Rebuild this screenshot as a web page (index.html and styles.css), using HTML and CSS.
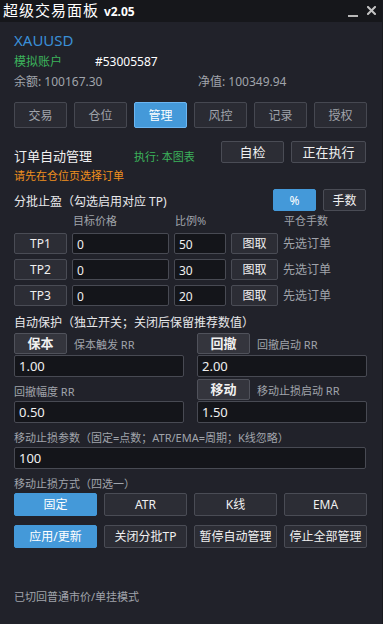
FILE: index.html
```html
<!DOCTYPE html>
<html lang="zh-CN">
<head>
    <meta charset="UTF-8">
    <meta name="viewport" content="width=device-width, initial-scale=1.0">
    <title>超级交易面板</title>
    <link rel="stylesheet" href="styles.css">
</head>
<body>

<div class="titlebar">
    <div class="title">超级交易面板 <span class="version">v2.05</span></div>
    <div class="win-ctrl">
        <span class="win-min"></span>
        <svg class="win-close" width="9" height="9" viewBox="0 0 9 9">
            <path d="M1 1 L8 8 M8 1 L1 8" stroke="#c4c4c4" stroke-width="2" stroke-linecap="square"/>
        </svg>
    </div>
</div>

<div class="panel">
    <div class="symbol">XAUUSD</div>
    <div class="account-row">
        <span class="acc-type">模拟账户</span>
        <span class="acc-no">#53005587</span>
    </div>
    <div class="balance-row">
        <span class="bal">余额: 100167.30</span>
        <span class="equity">净值: 100349.94</span>
    </div>

    <div class="tabs">
        <button class="tab">交易</button>
        <button class="tab">仓位</button>
        <button class="tab active">管理</button>
        <button class="tab">风控</button>
        <button class="tab">记录</button>
        <button class="tab">授权</button>
    </div>

    <div class="manage-head">
        <div class="manage-title">
            <span class="section-big">订单自动管理</span>
            <span class="exec">执行: 本图表</span>
        </div>
        <div class="head-btns">
            <button class="btn btn-check">自检</button>
            <button class="btn btn-running">正在执行</button>
        </div>
    </div>
    <div class="warn">请先在仓位页选择订单</div>

    <div class="tp-head">
        <span class="section">分批止盈（勾选启用对应 TP)</span>
        <div class="head-btns">
            <button class="btn btn-blue btn-unit">%</button>
            <button class="btn btn-unit">手数</button>
        </div>
    </div>
    <div class="tp-grid tp-labels">
        <span></span>
        <span>目标价格</span>
        <span>比例%</span>
        <span></span>
        <span>平仓手数</span>
    </div>
    <div class="tp-grid tp-row">
        <button class="btn">TP1</button>
        <div class="field">0</div>
        <div class="field">50</div>
        <button class="btn">图取</button>
        <span class="tp-lots">先选订单</span>
    </div>
    <div class="tp-grid tp-row">
        <button class="btn">TP2</button>
        <div class="field">0</div>
        <div class="field">30</div>
        <button class="btn">图取</button>
        <span class="tp-lots">先选订单</span>
    </div>
    <div class="tp-grid tp-row">
        <button class="btn">TP3</button>
        <div class="field">0</div>
        <div class="field">20</div>
        <button class="btn">图取</button>
        <span class="tp-lots">先选订单</span>
    </div>

    <div class="section protect-title">自动保护（独立开关；关闭后保留推荐数值）</div>
    <div class="protect">
        <div class="protect-col">
            <div class="toggle-row">
                <button class="btn btn-toggle">保本</button>
                <span class="hint">保本触发 RR</span>
            </div>
            <div class="field field-wide">1.00</div>
            <div class="toggle-row">
                <span class="hint hint-left">回撤幅度 RR</span>
            </div>
            <div class="field field-wide">0.50</div>
        </div>
        <div class="protect-col">
            <div class="toggle-row">
                <button class="btn btn-toggle">回撤</button>
                <span class="hint">回撤启动 RR</span>
            </div>
            <div class="field field-wide">2.00</div>
            <div class="toggle-row">
                <button class="btn btn-toggle">移动</button>
                <span class="hint">移动止损启动 RR</span>
            </div>
            <div class="field field-wide">1.50</div>
        </div>
    </div>

    <div class="hint sub-title">移动止损参数（固定=点数；ATR/EMA=周期；K线忽略）</div>
    <div class="field field-wide">100</div>

    <div class="hint sub-title">移动止损方式（四选一）</div>
    <div class="quad modes">
        <button class="btn btn-blue">固定</button>
        <button class="btn">ATR</button>
        <button class="btn">K线</button>
        <button class="btn">EMA</button>
    </div>
    <div class="quad actions">
        <button class="btn btn-blue">应用/更新</button>
        <button class="btn">关闭分批TP</button>
        <button class="btn">暂停自动管理</button>
        <button class="btn">停止全部管理</button>
    </div>

    <div class="status">已切回普通市价/单挂模式</div>
</div>

</body>
</html>
```

FILE: styles.css
```css
* {
    box-sizing: border-box;
}

html, body {
    margin: 0;
    padding: 0;
    width: 383px;
    height: 624px;
    overflow: hidden;
}

body {
    font-family: "Noto Sans", "Noto Sans CJK SC", sans-serif;
    background-color: #21222a;
    color: #e8e8ea;
    font-size: 12px;
    border-right: 1px solid #18191e;
}

button {
    font-family: inherit;
    margin: 0;
    padding: 0;
}

.titlebar {
    height: 22px;
    background-color: #16171b;
    display: flex;
    align-items: center;
    justify-content: space-between;
    padding: 0 6px 0 3px;
}

.title {
    font-size: 15px;
    letter-spacing: 1px;
    line-height: 22px;
    color: #ffffff;
}

.version {
    font-size: 12px;
    font-weight: bold;
    letter-spacing: 0;
}

.win-ctrl {
    display: flex;
    align-items: center;
    gap: 9px;
    padding-top: 1px;
}

.win-min {
    display: block;
    width: 10px;
    height: 2px;
    background-color: #b8b8b8;
    margin-top: 9px;
}

.win-close {
    display: block;
    margin-bottom: 3px;
}

.panel {
    padding: 0 16px 0 14px;
}

.symbol {
    margin-top: 8px;
    height: 20px;
    line-height: 20px;
    font-size: 15px;
    color: #3a8fd6;
}

.account-row, .balance-row {
    margin-top: 2px;
    height: 20px;
    line-height: 20px;
    display: flex;
}

.balance-row {
    margin-top: 0;
    color: #a0a4ab;
}

.acc-type {
    color: #3cb35c;
    width: 81px;
}

.acc-no {
    color: #ffffff;
}

.bal {
    width: 184px;
}

.tabs {
    margin-top: 10px;
    display: grid;
    grid-template-columns: repeat(6, 53px);
    column-gap: 7px;
}

.tab {
    height: 26px;
    background-color: #2a2b33;
    border: 1px solid #464851;
    border-radius: 2px;
    color: #a0a4ab;
    font-size: 12px;
}

.tab.active {
    background-color: #4499d9;
    border-color: #6cb6f2;
    color: #ffffff;
}

.btn {
    height: 21px;
    background-color: #2c2d35;
    border: 1px solid #4a4c55;
    border-radius: 2px;
    color: #f0f0f0;
    font-size: 12px;
    line-height: 19px;
}

.btn-blue {
    background-color: #4499d9;
    border-color: #4499d9;
    color: #ffffff;
}

.manage-head, .tp-head {
    display: flex;
    justify-content: space-between;
    height: 22px;
}

.manage-head {
    margin-top: 13px;
}

.manage-title {
    display: flex;
    align-items: baseline;
    padding-top: 5px;
}

.section-big {
    font-size: 13px;
    color: #f0f0f0;
    width: 120px;
}

.exec {
    color: #3cb35c;
    font-size: 11px;
}

.head-btns {
    display: flex;
    gap: 7px;
}

.btn-check {
    width: 63px;
    height: 22px;
    font-size: 13px;
}

.btn-running {
    width: 75px;
    height: 22px;
    font-size: 13px;
}

.warn {
    margin-top: 5px;
    height: 16px;
    line-height: 16px;
    font-size: 11px;
    color: #f0901e;
}

.tp-head {
    margin-top: 5px;
    align-items: flex-end;
}

.section {
    font-size: 12px;
    color: #e8e8ea;
    line-height: 16px;
}

.tp-head .section {
    padding-bottom: 1px;
}

.btn-unit {
    width: 43px;
    height: 22px;
    font-size: 12px;
}

.tp-head .head-btns {
    align-self: flex-start;
}

.tp-grid {
    display: grid;
    grid-template-columns: 53px 97px 52px 47px 1fr;
    column-gap: 5px;
}

.tp-labels {
    margin-top: 3px;
    height: 14px;
    line-height: 14px;
    font-size: 11px;
    color: #a0a4ab;
}

.tp-labels span {
    padding-left: 1px;
}

.tp-row {
    margin-top: 5px;
    height: 21px;
    align-items: center;
}

.field {
    height: 21px;
    background-color: #14151a;
    border: 1px solid #484a53;
    border-radius: 2px;
    padding-left: 4px;
    line-height: 21px;
    font-size: 12px;
    color: #f0f0f0;
}

.tp-lots {
    color: #a0a4ab;
    font-size: 12px;
    line-height: 21px;
}

.protect-title {
    margin-top: 9px;
}

.protect {
    margin-top: 2px;
    display: grid;
    grid-template-columns: 170px 170px;
    column-gap: 13px;
}

.protect-col .field-wide {
    margin-top: 1px;
}

.toggle-row {
    display: flex;
    align-items: center;
    height: 21px;
}

.protect-col .toggle-row + .field + .toggle-row {
    margin-top: 2px;
}

.btn-toggle {
    width: 53px;
    height: 21px;
    background-color: #34353d;
    border-color: #50525b;
    font-weight: bold;
    font-size: 13px;
}

.hint {
    color: #a0a4ab;
    font-size: 11px;
    margin-left: 7px;
}

.hint-left {
    margin-left: 0;
    padding-top: 3px;
}

.field-wide {
    height: 22px;
    line-height: 21px;
    font-size: 13px;
}

.sub-title {
    margin-left: 0;
    margin-top: 7px;
    height: 16px;
    line-height: 16px;
    margin-bottom: 1px;
}

.quad {
    display: grid;
    grid-template-columns: repeat(4, 83px);
    column-gap: 7px;
}

.quad .btn {
    height: 23px;
    line-height: 21px;
    font-size: 12px;
}

.modes {
    margin-top: 1px;
}

.actions {
    margin-top: 9px;
}

.status {
    margin-top: 41px;
    height: 16px;
    line-height: 16px;
    font-size: 11px;
    color: #a0a4ab;
}
```
